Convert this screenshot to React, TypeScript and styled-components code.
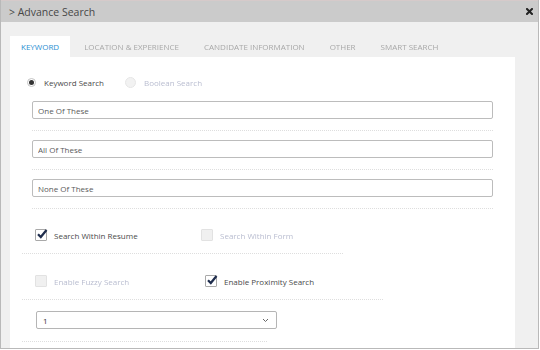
import styled, { createGlobalStyle } from 'styled-components';

const GlobalStyle = createGlobalStyle`
  html, body {
    margin: 0;
    padding: 0;
    background: #ffffff;
    font-family: 'Open Sans', 'Liberation Sans', sans-serif;
  }
  * {
    box-sizing: border-box;
  }
`;

const Dialog = styled.div`
  width: 539px;
  height: 349px;
  border: 1px solid #b9b9b9;
  border-top: none;
  display: flex;
  flex-direction: column;
  overflow: hidden;
  background: #f0f0f0;
`;

const Header = styled.div`
  height: 22px;
  flex-shrink: 0;
  background: #cbcbcb;
  border-top: 1px solid #d6caca;
  display: flex;
  align-items: center;
  justify-content: space-between;
  padding: 0 4px 0 8px;
  color: #474747;
  font-size: 10.5px;
`;

const Title = styled.span`
  letter-spacing: 0;
`;

const CloseButton = styled.button`
  border: none;
  background: transparent;
  padding: 0;
  width: 10px;
  height: 10px;
  display: flex;
  align-items: center;
  justify-content: center;
  cursor: pointer;
`;

const Body = styled.div`
  flex: 1;
  padding: 14px 23px 0 9px;
  display: flex;
  flex-direction: column;
`;

const TabList = styled.div`
  display: flex;
  gap: 3px;
  height: 21px;
`;

const Tab = styled.div<{ $active?: boolean }>`
  padding: 0 11px;
  display: flex;
  align-items: center;
  font-size: 8px;
  text-transform: uppercase;
  background: ${(p) => (p.$active ? '#ffffff' : 'transparent')};
  color: ${(p) => (p.$active ? '#2b8fd2' : '#a8a8a8')};
  filter: ${(p) => (p.$active ? 'none' : 'blur(0.7px)')};
  white-space: nowrap;
`;

const Panel = styled.div`
  flex: 1;
  background: #ffffff;
  padding: 16px 0 0 12px;
  display: flex;
  flex-direction: column;
`;

const RadioRow = styled.div`
  height: 19px;
  padding-left: 5px;
  display: flex;
  align-items: center;
`;

const RadioItem = styled.label<{ $disabled?: boolean }>`
  display: flex;
  align-items: center;
  gap: 8px;
  margin-right: 21px;
  font-size: 8px;
  color: ${(p) => (p.$disabled ? '#b9bdd0' : '#4a4a4a')};
  filter: ${(p) => (p.$disabled ? 'blur(0.7px)' : 'none')};
`;

const RadioDot = styled.span<{ $checked?: boolean; $disabled?: boolean }>`
  width: ${(p) => (p.$disabled ? 11 : 9)}px;
  height: ${(p) => (p.$disabled ? 11 : 9)}px;
  border-radius: 50%;
  border: 1px solid ${(p) => (p.$disabled ? '#e6e6e6' : '#c4c4c4')};
  background: ${(p) => (p.$disabled ? '#f2f2f2' : '#ffffff')};
  display: flex;
  align-items: center;
  justify-content: center;

  &::after {
    content: '';
    width: 5px;
    height: 5px;
    border-radius: 50%;
    background: #333333;
    display: ${(p) => (p.$checked ? 'block' : 'none')};
  }
`;

const Field = styled.div`
  width: 461px;
  margin-left: 10px;
  padding: 9px 0 11px;
  border-bottom: 1px dotted #dedede;
`;

const TextInput = styled.input`
  display: block;
  width: 100%;
  height: 18px;
  border: 1px solid #bcbcbc;
  border-radius: 2px;
  padding: 0 5px;
  font-family: 'Open Sans', 'Liberation Sans', sans-serif;
  font-size: 8px;
  color: #5a5a5a;
  outline: none;

  &::placeholder {
    color: #5a5a5a;
  }
`;

const CheckRow = styled.div<{ $width: number; $col: number; $top: number }>`
  width: ${(p) => p.$width}px;
  padding: ${(p) => p.$top}px 0 12px 13px;
  border-bottom: 1px dotted #dedede;
  display: grid;
  grid-template-columns: ${(p) => p.$col}px auto;
  align-items: center;
`;

const CheckItem = styled.label<{ $disabled?: boolean }>`
  display: flex;
  align-items: center;
  gap: 7px;
  height: 12px;
  font-size: 8px;
  color: ${(p) => (p.$disabled ? '#b9bdd0' : '#4a4a4a')};
  filter: ${(p) => (p.$disabled ? 'blur(0.7px)' : 'none')};
  white-space: nowrap;
`;

const Box = styled.span<{ $disabled?: boolean }>`
  width: 12px;
  height: 12px;
  border: 1px solid ${(p) => (p.$disabled ? '#e2e2e2' : '#a9a9a9')};
  background: ${(p) => (p.$disabled ? '#f0f0f0' : '#ffffff')};
  border-radius: 1px;
  position: relative;
  flex-shrink: 0;

  svg {
    position: absolute;
    left: 0px;
    top: -2px;
  }
`;

const SelectRow = styled.div`
  width: 245px;
  padding: 11px 0 12px 14px;
  border-bottom: 1px dotted #dedede;
`;

const SelectBox = styled.div`
  width: 241px;
  height: 18px;
  border: 1px solid #b5b5b5;
  border-radius: 2px;
  display: flex;
  align-items: center;
  justify-content: space-between;
  padding: 0 7px 0 6px;
  font-size: 8px;
  color: #333333;
`;

const Check = () => (
  <svg width="12" height="12" viewBox="0 0 12 12">
    <path d="M2 6.2 L4.8 9 L10.5 2" fill="none" stroke="#1f2d4d" strokeWidth="2.2" />
  </svg>
);

type CheckProps = { label: string; checked?: boolean; disabled?: boolean };

const CheckOption = ({ label, checked, disabled }: CheckProps) => (
  <CheckItem $disabled={disabled}>
    <Box $disabled={disabled}>{checked && <Check />}</Box>
    {label}
  </CheckItem>
);

const tabs = ['Keyword', 'Location & Experience', 'Candidate Information', 'Other', 'Smart Search'];

export default function App() {
  return (
    <>
      <GlobalStyle />
      <Dialog>
        <Header>
          <Title>&gt; Advance Search</Title>
          <CloseButton>
            <svg width="7" height="7" viewBox="0 0 7 7">
              <path d="M1 1 L6 6 M6 1 L1 6" stroke="#222" strokeWidth="2" strokeLinecap="square" />
            </svg>
          </CloseButton>
        </Header>
        <Body>
          <TabList>
            {tabs.map((t, i) => (
              <Tab key={t} $active={i === 0}>
                {t}
              </Tab>
            ))}
          </TabList>
          <Panel>
            <RadioRow>
              <RadioItem>
                <RadioDot $checked />
                Keyword Search
              </RadioItem>
              <RadioItem $disabled>
                <RadioDot $disabled />
                Boolean Search
              </RadioItem>
            </RadioRow>
            <Field>
              <TextInput placeholder="One Of These" />
            </Field>
            <Field>
              <TextInput placeholder="All Of These" />
            </Field>
            <Field>
              <TextInput placeholder="None Of These" />
            </Field>
            <CheckRow $width={321} $col={166} $top={20}>
              <CheckOption label="Search Within Resume" checked />
              <CheckOption label="Search Within Form" disabled />
            </CheckRow>
            <CheckRow $width={361} $col={170} $top={21}>
              <CheckOption label="Enable Fuzzy Search" disabled />
              <CheckOption label="Enable Proximity Search" checked />
            </CheckRow>
            <SelectRow>
              <SelectBox>
                <span>1</span>
                <svg width="7" height="5" viewBox="0 0 7 5">
                  <path d="M1 1 L3.5 3.5 L6 1" fill="none" stroke="#666" strokeWidth="1" />
                </svg>
              </SelectBox>
            </SelectRow>
          </Panel>
        </Body>
      </Dialog>
    </>
  );
}
